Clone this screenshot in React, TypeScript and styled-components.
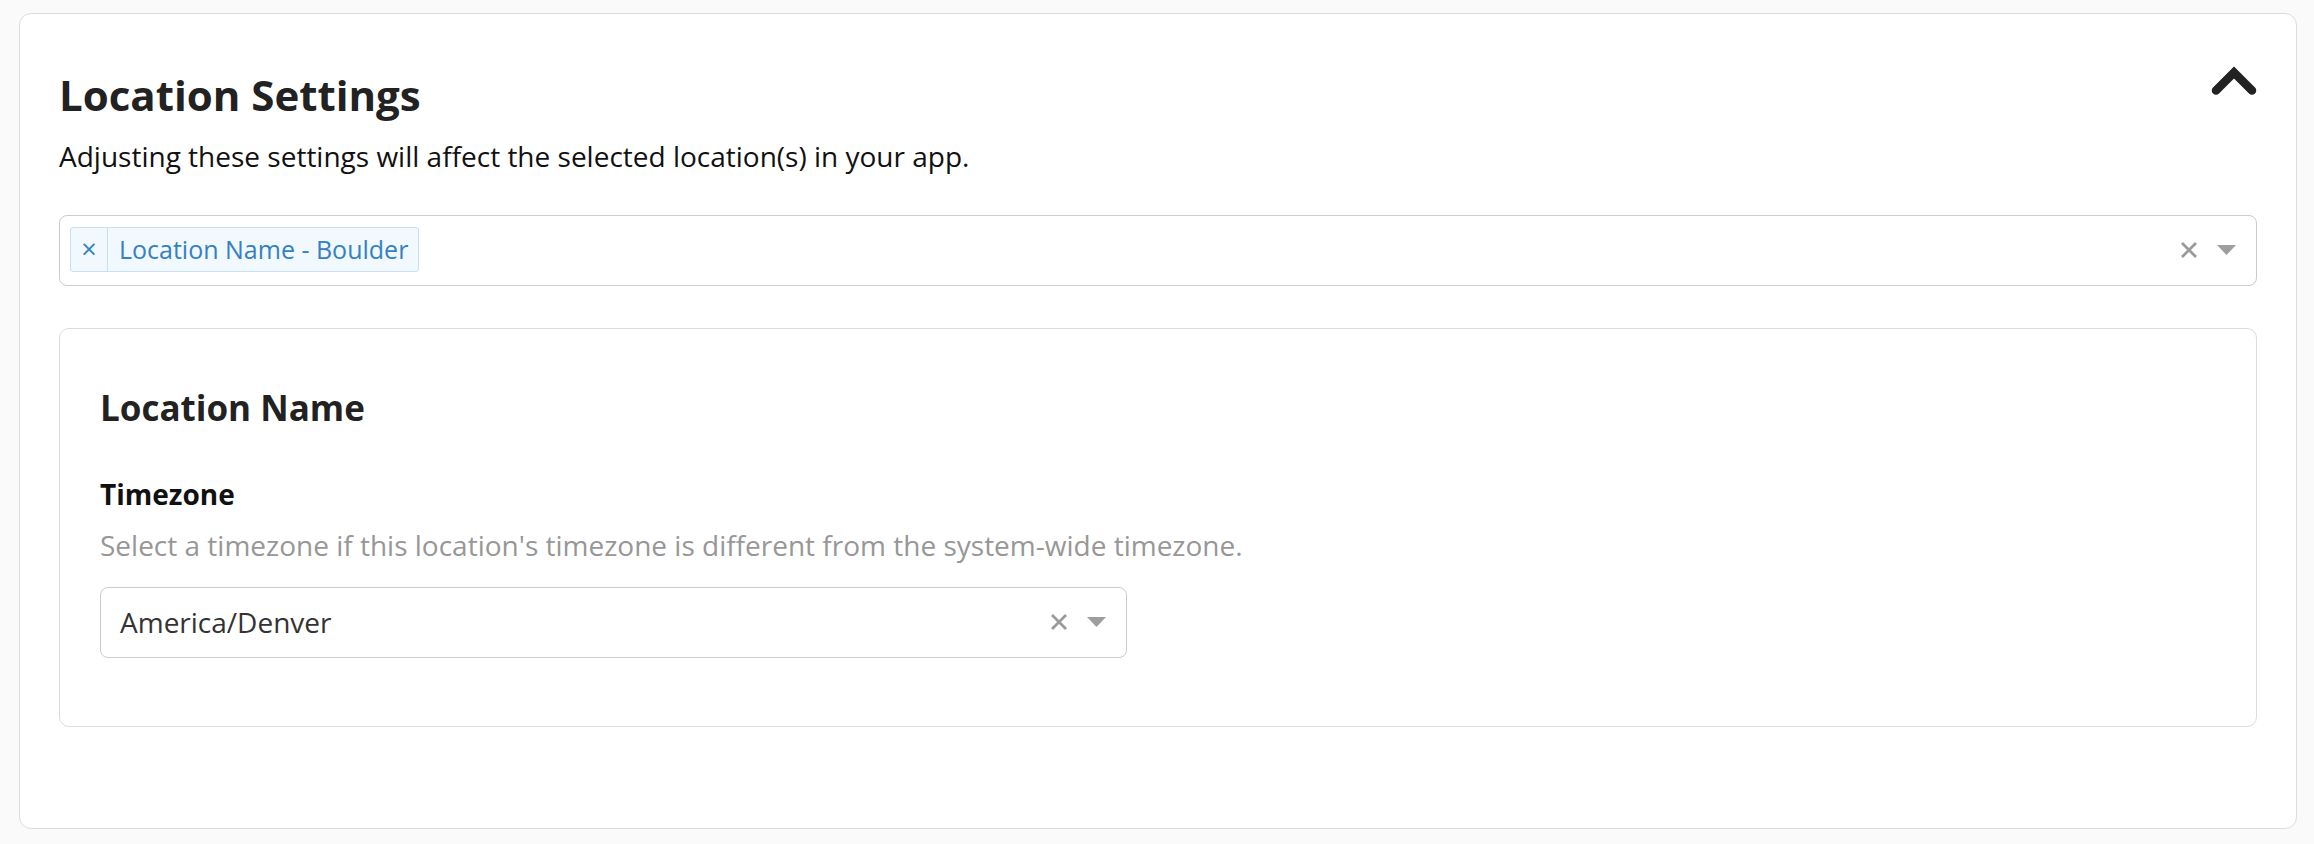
import React from 'react';
import styled, { createGlobalStyle } from 'styled-components';

const GlobalStyle = createGlobalStyle`
  html, body {
    margin: 0;
    padding: 0;
    background: #fafafa;
  }
  body {
    font-family: 'Open Sans', 'Noto Sans', sans-serif;
    color: #222;
  }
  * {
    box-sizing: border-box;
  }
`;

const Page = styled.div`
  padding: 13px 17px 15px 19px;
`;

const SettingsCard = styled.section`
  background: #fff;
  border: 1.5px solid #dcdcdc;
  border-radius: 12px;
  padding: 52px 39px 101px 39px;
`;

const Header = styled.div`
  display: flex;
  justify-content: space-between;
  align-items: flex-start;
`;

const Title = styled.h1`
  margin: 0;
  font-size: 42px;
  line-height: 57px;
  font-weight: 700;
  color: #222;
`;

const CollapseButton = styled.button`
  border: 0;
  background: none;
  padding: 0;
  margin: -1px -1px 0 0;
  display: block;
  cursor: pointer;
  line-height: 0;
`;

const Subtitle = styled.p`
  margin: 15px 0 0;
  font-size: 28px;
  line-height: 36px;
  color: #111;
`;

const SelectBox = styled.div<{ $width?: string; $gap?: number }>`
  display: flex;
  align-items: center;
  width: ${(p) => p.$width || '100%'};
  height: 71px;
  margin-top: ${(p) => p.$gap ?? 0}px;
  border: 1.5px solid #cbcbcb;
  border-radius: 8px;
  background: #fff;
  padding: 0 20px 2px 10px;
`;

const SelectValues = styled.div`
  flex: 1;
  display: flex;
  align-items: center;
  min-width: 0;
`;

const SingleValue = styled.span`
  padding-left: 9px;
  font-size: 28px;
  color: #333;
`;

const Tag = styled.span`
  display: inline-flex;
  align-items: stretch;
  height: 45px;
  background: #f1f8fe;
  border: 1.5px solid #c8e0f3;
  border-radius: 3px;
  color: #3481c4;
  font-size: 25px;
`;

const TagRemove = styled.span`
  width: 37px;
  display: flex;
  align-items: center;
  justify-content: center;
  border-right: 1.5px solid #c8e0f3;
  font-size: 27px;
  font-weight: 400;
  padding-bottom: 3px;
`;

const TagLabel = styled.span`
  display: flex;
  align-items: center;
  padding: 0 10px 2px 11px;
`;

const Indicators = styled.div`
  display: flex;
  align-items: center;
  gap: 19px;
`;

const Panel = styled.div`
  margin-top: 42px;
  border: 1.5px solid #dcdcdc;
  border-radius: 10px;
  padding: 55px 40px 68px 40px;
`;

const PanelTitle = styled.h2`
  margin: 0;
  font-size: 35px;
  line-height: 48px;
  font-weight: 700;
  color: #222;
`;

const FieldLabel = styled.div`
  margin-top: 44px;
  font-size: 28px;
  line-height: 36px;
  font-weight: 700;
  color: #111;
`;

const HelpText = styled.div`
  margin-top: 15px;
  font-size: 28px;
  line-height: 36px;
  color: #979797;
`;

function ClearIcon() {
  return (
    <svg width="18" height="18" viewBox="0 0 18 18">
      <path d="M2 2 L16 16 M16 2 L2 16" stroke="#9a9a9a" strokeWidth="2.8" />
    </svg>
  );
}

function ArrowIcon() {
  return (
    <svg width="19" height="10" viewBox="0 0 19 10">
      <path d="M0 0 H19 L9.5 10 Z" fill="#9e9e9e" />
    </svg>
  );
}

function ChevronUp() {
  return (
    <svg width="48" height="31" viewBox="0 0 48 31">
      <polyline
        points="6,25.5 24,7.5 42,25.5"
        fill="none"
        stroke="#222"
        strokeWidth="8.5"
        strokeLinecap="round"
        strokeLinejoin="miter"
      />
    </svg>
  );
}

function SelectIndicators() {
  return (
    <Indicators>
      <ClearIcon />
      <ArrowIcon />
    </Indicators>
  );
}

export default function App() {
  return (
    <>
      <GlobalStyle />
      <Page>
        <SettingsCard>
          <Header>
            <Title>Location Settings</Title>
            <CollapseButton aria-label="Collapse">
              <ChevronUp />
            </CollapseButton>
          </Header>
          <Subtitle>Adjusting these settings will affect the selected location(s) in your app.</Subtitle>

          <SelectBox $gap={41}>
            <SelectValues>
              <Tag>
                <TagRemove>×</TagRemove>
                <TagLabel>Location Name - Boulder</TagLabel>
              </Tag>
            </SelectValues>
            <SelectIndicators />
          </SelectBox>

          <Panel>
            <PanelTitle>Location Name</PanelTitle>
            <FieldLabel>Timezone</FieldLabel>
            <HelpText>Select a timezone if this location's timezone is different from the system-wide timezone.</HelpText>
            <SelectBox $width="1027px" $gap={24}>
              <SelectValues>
                <SingleValue>America/Denver</SingleValue>
              </SelectValues>
              <SelectIndicators />
            </SelectBox>
          </Panel>
        </SettingsCard>
      </Page>
    </>
  );
}
